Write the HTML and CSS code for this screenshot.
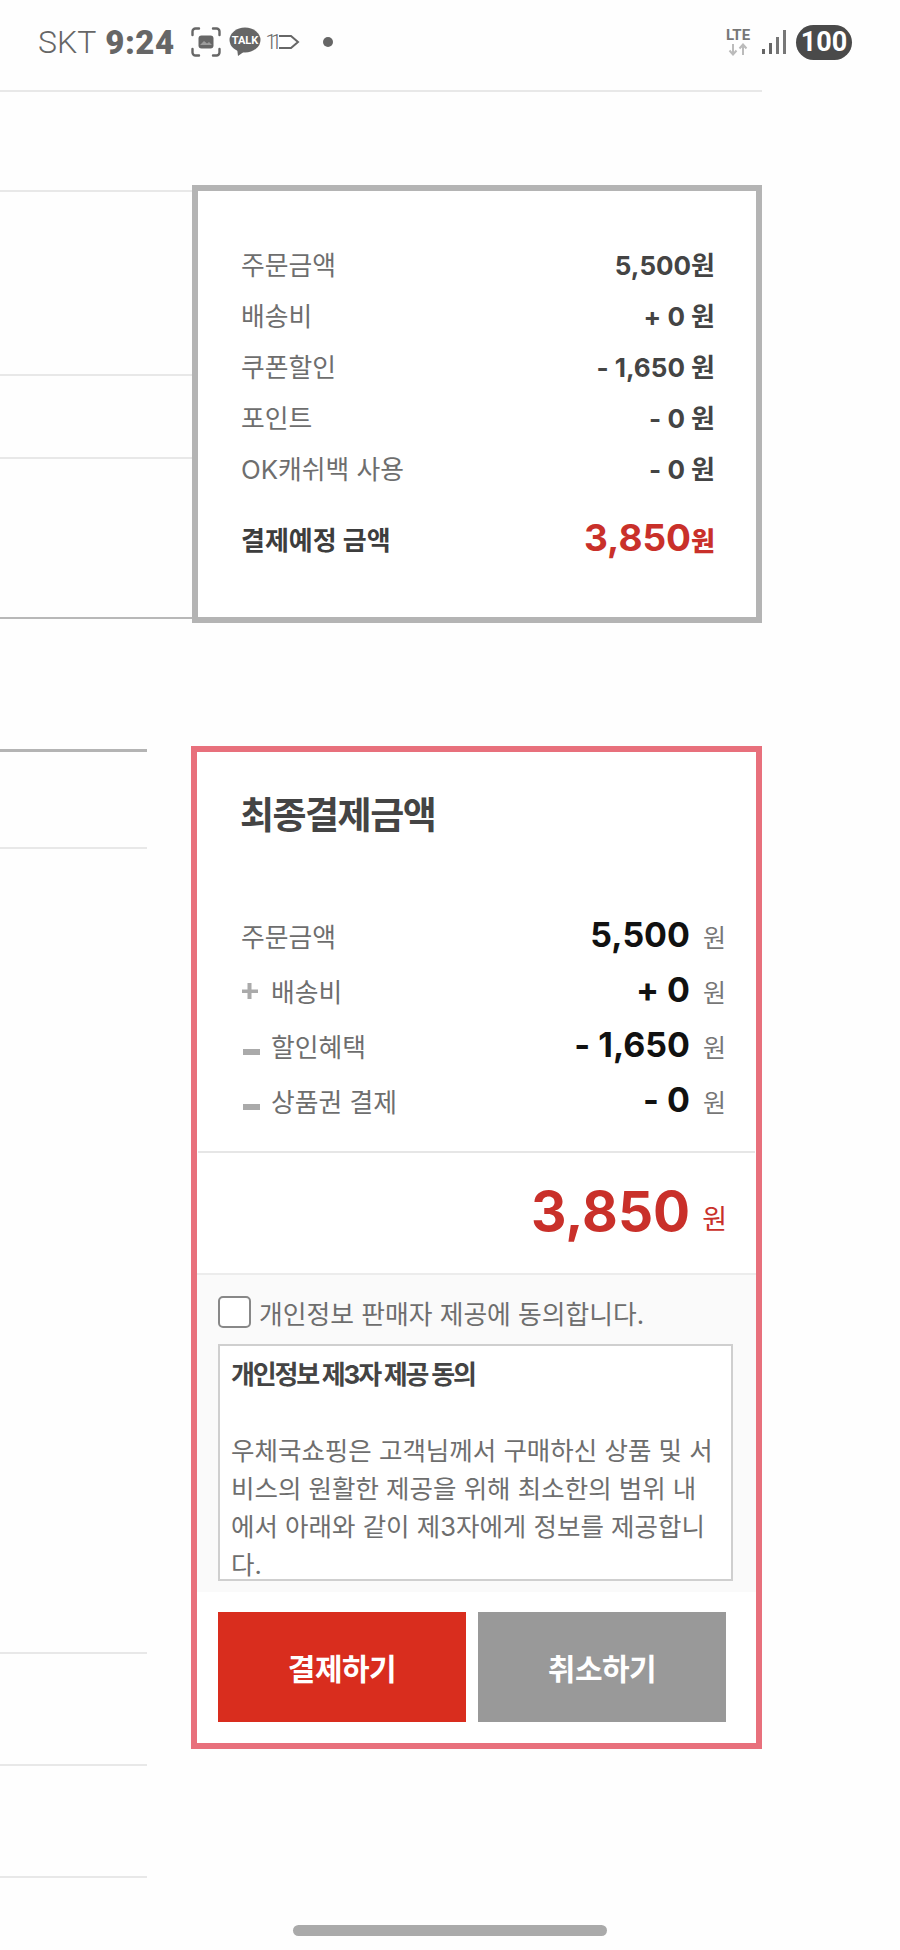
FILE: index.html
```html
<!DOCTYPE html>
<html lang="ko">
<head>
<meta charset="utf-8">
<meta name="viewport" content="width=device-width,initial-scale=1.0">
<title>최종결제금액</title>
<link rel="stylesheet" href="styles.css">
</head>
<body>

<header class="status">
  <div class="status-left">
    <span class="carrier">SKT</span>
    <span class="clock">9:24</span>
    <svg class="ico-shot" width="30" height="30" viewBox="0 0 30 30">
      <path d="M1.500 8V4.500a3 3 0 0 1 3-3H8M22 1.500h3.500a3 3 0 0 1 3 3V8M28.500 22v3.500a3 3 0 0 1-3 3H22M8 28.500H4.500a3 3 0 0 1-3-3V22" fill="none" stroke="#666" stroke-width="2.400" stroke-linecap="round"/>
      <rect x="7.500" y="8.500" width="15" height="13" rx="3" fill="#666"/>
      <path d="M9 18l4-4 3 2.500 2-1.500 3 3z" fill="#fff" opacity="0.35"/>
    </svg>
    <svg class="ico-talk" width="32" height="30" viewBox="0 0 32 30">
      <ellipse cx="16" cy="13" rx="15.500" ry="12.500" fill="#666"/>
      <path d="M8 21l1 8 7-5z" fill="#666"/>
      <text x="16" y="17" text-anchor="middle" class="talk-text">TALK</text>
    </svg>
    <span class="count">11</span>
    <svg class="ico-tag" width="22" height="16" viewBox="0 0 22 16">
      <path d="M1 2h12l7 6-7 6H1" fill="none" stroke="#666" stroke-width="2"/>
    </svg>
    <span class="dot"></span>
  </div>
  <div class="status-right">
    <div class="net">
      <span class="net-lte">LTE</span>
      <svg width="20" height="13" viewBox="0 0 20 13">
        <path d="M5 1v10M1.500 7.500L5 11.500l3.500-4M15 12V2M11.500 5.500L15 1.500l3.500 4" fill="none" stroke="#bbb" stroke-width="2"/>
      </svg>
    </div>
    <svg class="ico-signal" width="24" height="25" viewBox="0 0 24 25">
      <rect x="0" y="19" width="3" height="5" fill="#666"/>
      <rect x="7" y="13" width="3" height="11" fill="#666"/>
      <rect x="14" y="7" width="3" height="17" fill="#777"/>
      <rect x="21" y="0" width="3" height="24" fill="#777"/>
    </svg>
    <span class="battery">100</span>
  </div>
</header>
<div class="top-rule"></div>

<section class="sec sec-summary">
  <div class="side side-summary">
    <div class="side-row h185"></div>
    <div class="side-row h83"></div>
    <div class="side-row side-row-dark h160"></div>
  </div>
  <div class="box box-gray">
    <div class="row"><span class="lbl">주문금액</span><span class="val">5,500<b class="unit-b">원</b></span></div>
    <div class="row"><span class="lbl">배송비</span><span class="val">+ 0 <b class="unit-b">원</b></span></div>
    <div class="row"><span class="lbl">쿠폰할인</span><span class="val">- 1,650 <b class="unit-b">원</b></span></div>
    <div class="row"><span class="lbl">포인트</span><span class="val">- 0 <b class="unit-b">원</b></span></div>
    <div class="row"><span class="lbl">OK캐쉬백 사용</span><span class="val">- 0 <b class="unit-b">원</b></span></div>
    <div class="row row-due"><span class="lbl-due">결제예정 금액</span><span class="val-due">3,850<b class="unit-due">원</b></span></div>
  </div>
</section>

<section class="sec sec-final">
  <div class="side side-final">
    <div class="side-head"></div>
    <div class="side-row h97"></div>
    <div class="side-row h804"></div>
    <div class="side-row h112"></div>
    <div class="side-row h112"></div>
  </div>
  <div class="box box-pink">
    <h2 class="final-title">최종결제금액</h2>
    <div class="final-rows">
      <div class="frow"><span class="flbl">주문금액</span><span class="famt">5,500<span class="funit">원</span></span></div>
      <div class="frow"><span class="flbl"><svg class="sign" width="30" height="16" viewBox="0 0 30 16"><path d="M1 6.500h5.500V0h4v6.500H17v3.500h-6.500v6h-4v-6H1z" fill="#aaa"/></svg>배송비</span><span class="famt">+ 0<span class="funit">원</span></span></div>
      <div class="frow"><span class="flbl"><svg class="sign sign-m" width="30" height="16" viewBox="0 0 30 16"><rect x="2" y="5" width="17" height="6" fill="#aaa"/></svg>할인혜택</span><span class="famt">- 1,650<span class="funit">원</span></span></div>
      <div class="frow"><span class="flbl"><svg class="sign sign-m" width="30" height="16" viewBox="0 0 30 16"><rect x="2" y="5" width="17" height="6" fill="#aaa"/></svg>상품권 결제</span><span class="famt">- 0<span class="funit">원</span></span></div>
    </div>
    <div class="final-total"><span class="total-num">3,850</span><span class="total-unit">원</span></div>
    <div class="consent">
      <label class="agree"><span class="check"></span>개인정보 판매자 제공에 동의합니다.</label>
      <div class="terms">
        <p class="terms-head">개인정보 제3자 제공 동의</p>
        <p class="terms-body">우체국쇼핑은 고객님께서 구매하신 상품 및 서비스의 원활한 제공을 위해 최소한의 범위 내에서 아래와 같이 제3자에게 정보를 제공합니다.</p>
      </div>
    </div>
    <div class="btns">
      <button class="btn btn-pay">결제하기</button>
      <button class="btn btn-cancel">취소하기</button>
    </div>
  </div>
</section>

<div class="home-pill"></div>

</body>
</html>
```

FILE: styles.css
```css
body{
  margin:0;
  width:900px;
  height:1950px;
  overflow:hidden;
  position:relative;
  background:#fefefe;
  font-family:Inter,"Noto Sans CJK KR",sans-serif;
  color:#666666;
}

/* status bar */
.status{
  height:90px;
  display:flex;
  justify-content:space-between;
  align-items:center;
  padding:0 48px 6px 38px;
  box-sizing:border-box;
}

.status-left,
.status-right{
  display:flex;
  align-items:center;
}

.carrier{
  font-family:Roboto,sans-serif;
  font-size:32px;
  font-weight:300;
  color:#666666;
}

.clock{
  font-family:Roboto,sans-serif;
  font-size:33px;
  font-weight:900;
  color:#666666;
  margin-left:9px;
  letter-spacing:0.5px;
}

.ico-shot{
  margin-left:16px;
}

.ico-talk{
  margin-left:8px;
}

.talk-text{
  font-family:Roboto,sans-serif;
  font-size:11px;
  font-weight:700;
  fill:#ffffff;
}

.count{
  font-family:Roboto,sans-serif;
  font-size:20px;
  font-weight:300;
  letter-spacing:-6px;
  margin-left:5px;
}

.ico-tag{
  margin-left:2px;
}

.dot{
  width:10px;
  height:10px;
  border-radius:50%;
  background:#666666;
  margin-left:23px;
}

.net{
  display:flex;
  flex-direction:column;
  align-items:center;
  width:28px;
}

.net-lte{
  font-family:Roboto,sans-serif;
  font-size:15px;
  line-height:15px;
  font-weight:700;
  color:#777777;
}

.ico-signal{
  margin-left:10px;
}

.battery{
  margin-left:10px;
  width:56px;
  height:35px;
  border-radius:18px;
  background:#4a4a4a;
  color:#ffffff;
  font-family:Roboto,sans-serif;
  font-size:27px;
  font-weight:700;
  line-height:35px;
  text-align:center;
}

.top-rule{
  width:762px;
  height:2px;
  background:#e8e8e8;
}

/* page sections */
.sec{
  display:flex;
  width:762px;
}

.sec-summary{
  margin-top:93px;
}

.sec-final{
  margin-top:123px;
}

.side{
  flex:none;
}

.side-summary{
  width:192px;
  padding-top:5px;
  box-sizing:border-box;
}

.side-summary .side-row:first-child{
  border-top:2px solid #e8e8e8;
}

.side-final{
  width:147px;
  margin-right:44px;
  padding-top:3px;
}

.side-head{
  height:3px;
  background:#b4b4b4;
}

.side-row{
  box-sizing:border-box;
  border-bottom:2px solid #e8e8e8;
}

.side-row-dark{
  border-bottom-color:#b8b8b8;
}

.h185{
  height:186px;
}

.h83{
  height:83px;
}

.h160{
  height:160px;
}

.h97{
  height:97px;
}

.h804{
  height:805px;
}

.h112{
  height:112px;
}

.box{
  flex:1;
  box-sizing:border-box;
  background:#ffffff;
}

/* gray summary box */
.box-gray{
  height:438px;
  border:6px solid #b4b4b4;
  padding:47px 41px 0 43px;
}

.row{
  display:flex;
  justify-content:space-between;
  align-items:center;
  height:51px;
}

.lbl{
  font-size:25.8px;
  color:#6e6e6e;
}

.val{
  font-size:26px;
  font-weight:700;
  color:#444444;
}

.unit-b{
  font-size:26px;
  font-weight:700;
}

.row-due{
  margin-top:20px;
}

.lbl-due{
  font-size:26px;
  font-weight:700;
  color:#3d3d3d;
}

.val-due{
  font-size:37px;
  font-weight:700;
  color:#c9302a;
  margin-top:-3px;
}

.unit-due{
  font-size:26px;
}

/* pink final box */
.box-pink{
  height:1003px;
  border:6px solid #e8707c;
}

.final-title{
  margin:39px 0 67px 43px;
  font-size:37px;
  line-height:50px;
  font-weight:700;
  letter-spacing:-1.5px;
  color:#444444;
}

.final-rows{
  padding:0 29px 23px 43px;
  border-bottom:2px solid #e6e6e6;
  margin:0 1px;
}

.frow{
  display:flex;
  justify-content:space-between;
  align-items:center;
  height:55px;
}

.flbl{
  display:flex;
  align-items:center;
  font-size:25.8px;
  color:#6e6e6e;
}

.sign{
  flex:none;
}

.sign-m{
  margin-top:12px;
}

.famt{
  font-size:34px;
  font-weight:700;
  color:#111111;
  margin-top:-3px;
}

.funit{
  font-size:25px;
  font-weight:400;
  color:#777777;
  margin-left:13px;
}

.final-total{
  height:120px;
  box-sizing:border-box;
  padding:0 29px 4px 0;
  display:flex;
  justify-content:flex-end;
  align-items:center;
}

.total-num{
  font-size:55px;
  font-weight:700;
  color:#c9302a;
}

.total-unit{
  font-size:27px;
  color:#c9302a;
  margin-left:12px;
  margin-top:12px;
}

.consent{
  height:319px;
  box-sizing:border-box;
  background:#fafafa;
  border-top:2px solid #ececec;
  padding:21px 23px 0 21px;
}

.agree{
  display:flex;
  align-items:center;
  height:32px;
  font-size:25.8px;
  color:#6e6e6e;
}

.check{
  width:33px;
  height:32px;
  box-sizing:border-box;
  border:2px solid #888888;
  border-radius:5px;
  margin-right:8px;
  background:#ffffff;
}

.terms{
  margin-top:16px;
  height:237px;
  box-sizing:border-box;
  border:2px solid #cfcfcf;
  background:#ffffff;
  padding:10px 15px 0 11px;
  overflow:hidden;
}

.terms-head{
  margin:0;
  font-size:26px;
  line-height:38px;
  font-weight:700;
  letter-spacing:-2.2px;
  color:#444444;
}

.terms-body{
  margin:38px 0 0 0;
  font-size:25.5px;
  line-height:38px;
  color:#6e6e6e;
}

.btns{
  display:flex;
  gap:12px;
  padding:20px 0 0 21px;
}

.btn{
  width:248px;
  height:110px;
  border:0;
  padding:0;
  color:#ffffff;
  font-family:inherit;
  font-size:30px;
  font-weight:700;
  letter-spacing:-0.5px;
}

.btn-pay{
  background:#d92d1e;
}

.btn-cancel{
  background:#999999;
}

.home-pill{
  position:absolute;
  left:293px;
  top:1925px;
  width:314px;
  height:11px;
  border-radius:6px;
  background:#aaaaaa;
}
```
